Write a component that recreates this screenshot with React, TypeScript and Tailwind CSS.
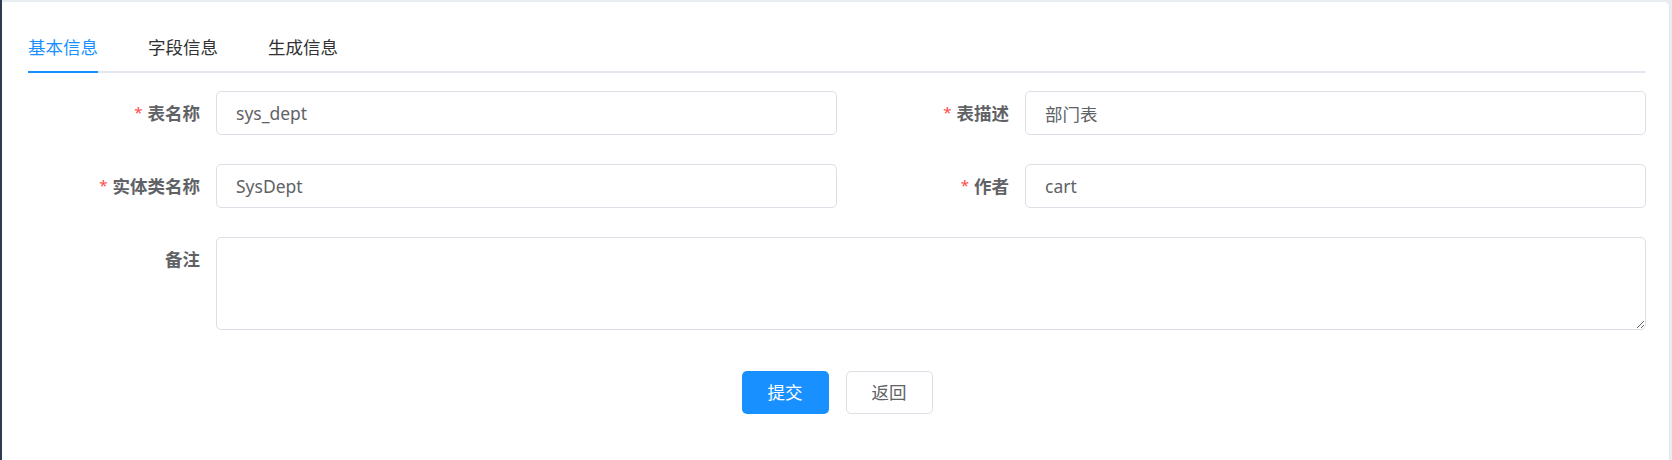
import { useState } from "react";

const FONT = "font-['Noto_Sans','Noto_Sans_CJK_SC',sans-serif]";

const TABS = ["基本信息", "字段信息", "生成信息"];

function Label({ text, required }: { text: string; required?: boolean }) {
  return (
    <div className="h-[44px] w-[188px] shrink-0 pr-[16px] text-right text-[17.5px] leading-[44px] font-bold text-[#606266]">
      {required && (
        <span className="mr-[5px] align-top text-[15px] leading-[42px] font-normal text-[#ff4949]">*</span>
      )}
      {text}
    </div>
  );
}

function Field({ label, value, required }: { label: string; value: string; required?: boolean }) {
  return (
    <div className="flex">
      <Label text={label} required={required} />
      <input
        defaultValue={value}
        className="h-[44px] flex-1 rounded-[5px] border border-[#dcdfe6] bg-white px-[19px] text-[17.5px] text-[#606266] outline-none"
      />
    </div>
  );
}

function App() {
  const [active, setActive] = useState(0);

  return (
    <div className={`flex h-[460px] w-full bg-[#e9ecf1] ${FONT}`}>
      <div className="w-[2px] shrink-0 bg-[#2c3b50]" />
      <div className="flex-1 pt-[2px] pr-[2px]">
        <div className="h-full rounded-tr-[5px] border-r border-[#e4e7ed] bg-white pl-[26px] pr-[23px] pt-[21px]">
          <div className="flex h-[50px] border-b-2 border-[#e4e7ed]">
            {TABS.map((t, i) => (
              <div
                key={t}
                onClick={() => setActive(i)}
                className={i === 0 ? "pr-[25px]" : "px-[25px]"}
              >
                <span
                  className={
                    i === active
                      ? "-mb-[2px] flex h-[50px] items-center border-b-2 border-[#1890ff] text-[17.5px] text-[#1890ff]"
                      : "flex h-[48px] items-center text-[17.5px] text-[#303133]"
                  }
                >
                  {t}
                </span>
              </div>
            ))}
          </div>

          <div className="mt-[18px] grid grid-cols-2 gap-y-[29px]">
            <Field label="表名称" value="sys_dept" required />
            <Field label="表描述" value="部门表" required />
            <Field label="实体类名称" value="SysDept" required />
            <Field label="作者" value="cart" required />
            <div className="col-span-2 flex">
              <Label text="备注" />
              <textarea className="h-[93px] flex-1 rounded-[5px] border border-[#dcdfe6] bg-white px-[19px] py-[6px] text-[17.5px] text-[#606266] outline-none" />
            </div>
          </div>

          <div className="mt-[41px] flex justify-center gap-[17px]">
            <button className="h-[43px] w-[87px] rounded-[5px] bg-[#1890ff] text-[17.5px] text-white">
              提交
            </button>
            <button className="h-[43px] w-[87px] rounded-[5px] border border-[#dcdfe6] bg-white text-[17.5px] text-[#606266]">
              返回
            </button>
          </div>
        </div>
      </div>
    </div>
  );
}

export default App;
